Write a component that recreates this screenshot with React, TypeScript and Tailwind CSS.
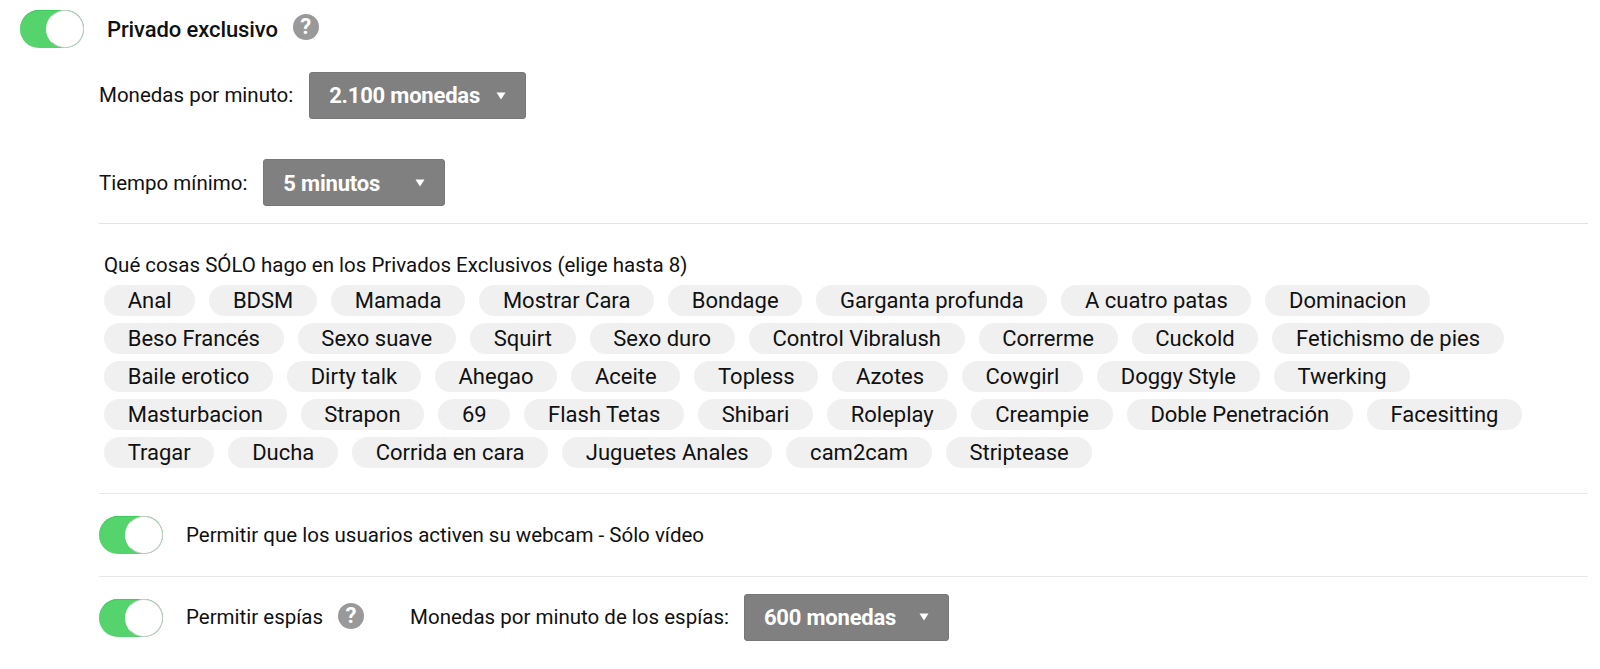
import React from 'react';

const font = "font-['Roboto',sans-serif]";

const chipRows = [
  ['Anal', 'BDSM', 'Mamada', 'Mostrar Cara', 'Bondage', 'Garganta profunda', 'A cuatro patas', 'Dominacion'],
  ['Beso Francés', 'Sexo suave', 'Squirt', 'Sexo duro', 'Control Vibralush', 'Correrme', 'Cuckold', 'Fetichismo de pies'],
  ['Baile erotico', 'Dirty talk', 'Ahegao', 'Aceite', 'Topless', 'Azotes', 'Cowgirl', 'Doggy Style', 'Twerking'],
  ['Masturbacion', 'Strapon', '69', 'Flash Tetas', 'Shibari', 'Roleplay', 'Creampie', 'Doble Penetración', 'Facesitting'],
  ['Tragar', 'Ducha', 'Corrida en cara', 'Juguetes Anales', 'cam2cam', 'Striptease'],
];

function Toggle() {
  return (
    <div className="flex h-[38px] w-[64px] shrink-0 justify-end rounded-full bg-[#55d46d] shadow-[inset_0_1px_1px_#3ecb5c]">
      <div className="h-[38px] w-[38px] rounded-full border border-[#c8c8c8] border-l-white bg-white" />
    </div>
  );
}

function Help() {
  return (
    <span className="flex h-[26px] w-[26px] shrink-0 items-center justify-center rounded-full bg-[#999999] text-[22px] leading-none font-bold text-white">
      ?
    </span>
  );
}

function Select({ label, width, textClass = '' }: { label: string; width: string; textClass?: string }) {
  return (
    <div className={`flex h-[47px] items-center justify-between rounded-[3px] border border-[#777777] bg-[#808080] pr-[19px] pl-[19px] ${width}`}>
      <span className={`text-[22px] font-bold tracking-[-0.2px] text-white ${textClass}`}>{label}</span>
      <svg width="10" height="8" viewBox="0 0 10 8">
        <path d="M0.5 0.5h9L5 7.5z" fill="#ffffff" />
      </svg>
    </div>
  );
}

export default function App() {
  return (
    <div className={`${font} min-h-[669px] bg-white pt-[10px] pr-[12px] pl-[20px] text-[#111111]`}>
      <div className="flex h-[38px] items-center">
        <Toggle />
        <span className="ml-[23px] text-[22px] font-medium tracking-[-0.1px]">Privado exclusivo</span>
        <span className="ml-[15px] -translate-y-[2px]">
          <Help />
        </span>
      </div>

      <div className="ml-[79px]">
        <div className="mt-[24px] flex items-center gap-[16px]">
          <span className="text-[20.5px]">Monedas por minuto:</span>
          <Select label="2.100 monedas" width="w-[217px]" />
        </div>
        <div className="mt-[40px] flex items-center gap-[16px]">
          <span className="mt-[2px] text-[20.5px]">Tiempo mínimo:</span>
          <Select label="5 minutos" width="w-[182px]" textClass="mt-[2px]" />
        </div>

        <div className="mt-[17px] border-t border-[#e3e3e3] pt-[31px] pb-[25px] pl-[5px]">
          <p className="text-[20.5px] leading-[21px]">Qué cosas SÓLO hago en los Privados Exclusivos (elige hasta 8)</p>
          <div className="mt-[9px] flex flex-col gap-[7px]">
            {chipRows.map((row, index) => (
              <div key={index} className="flex gap-[14px]">
                {row.map((chip) => (
                  <span key={chip} className="flex h-[31px] items-center rounded-full bg-[#f0f0f0] px-[23.7px] text-[22px]">
                    {chip}
                  </span>
                ))}
              </div>
            ))}
          </div>
        </div>

        <div className="flex h-[83px] items-center gap-[23px] border-t border-[#e8e8e8]">
          <Toggle />
          <span className="text-[20.5px]">Permitir que los usuarios activen su webcam - Sólo vídeo</span>
        </div>

        <div className="flex h-[83px] items-center border-t border-[#e8e8e8] pb-[2px]">
          <div className="mt-[2px]">
            <Toggle />
          </div>
          <span className="ml-[23px] text-[20.5px]">Permitir espías</span>
          <span className="mb-[3px] ml-[15px]">
            <Help />
          </span>
          <span className="ml-[46px] text-[20.5px]">Monedas por minuto de los espías:</span>
          <span className="ml-[15px]">
            <Select label="600 monedas" width="w-[205px]" />
          </span>
        </div>
      </div>
    </div>
  );
}
